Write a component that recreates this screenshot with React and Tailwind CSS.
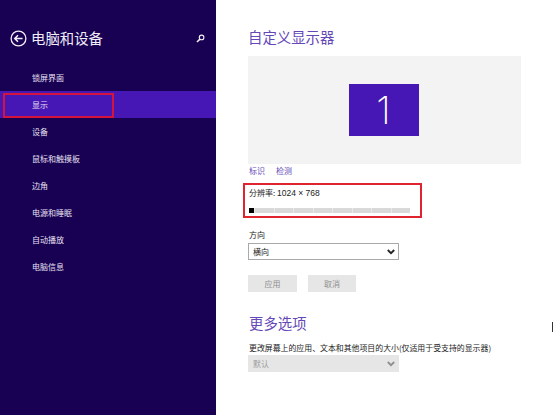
import React from 'react';

const FONT = "font-['Noto_Sans_CJK_SC','Liberation_Sans',sans-serif]";

const navItems = ['锁屏界面', '显示', '设备', '鼠标和触摸板', '边角', '电源和睡眠', '自动播放', '电脑信息'];
const sliderSegments = [1, 2, 3, 4, 5, 6, 7, 8];

const Chevron = ({ color }) => (
  <svg width="8" height="6" viewBox="0 0 8 6" fill="none" stroke={color} strokeWidth="1.8">
    <path d="M0.8 1 L4 4.2 L7.2 1" />
  </svg>
);

const Sidebar = () => (
  <aside className="relative w-[216px] shrink-0 bg-[#180052] text-[#e6e0f2]">
    <div className="flex items-start pl-[10px] pr-[11px] pt-[29px] h-[64px]">
      <svg width="17" height="17" viewBox="0 0 17 17" fill="none" stroke="#f2eff8" className="shrink-0 mt-px">
        <circle cx="8.5" cy="8.5" r="7.4" strokeWidth="1.3" />
        <path d="M12.6 8.5 H5 M8 5.3 L4.8 8.5 L8 11.7" strokeWidth="1.6" />
      </svg>
      <h1 className="ml-[4px] text-[14.4px] leading-[18px] text-[#f0edf7]">电脑和设备</h1>
      <svg width="9" height="9" viewBox="0 0 9 9" fill="none" stroke="#f2eff8" className="ml-auto mt-[5px]">
        <circle cx="5.6" cy="3.4" r="2.3" strokeWidth="1.1" />
        <path d="M3.9 5.1 L1 8" strokeWidth="1.5" />
      </svg>
    </div>
    <nav className="flex flex-col">
      {navItems.map((item) => (
        <div
          key={item}
          className={`h-[27px] flex items-center pl-[32px] text-[8px] ${item === '显示' ? 'bg-[#4617b4]' : ''}`}
        >
          {item}
        </div>
      ))}
    </nav>
    {/* rote Markierung */}
    <div className="absolute left-[3px] top-[93px] w-[111px] h-[25px] ring-2 ring-inset ring-[#d4143c]" />
  </aside>
);

const Main = () => (
  <main className="relative flex-1 pl-[248px] -ml-[216px] pt-[28px] text-[#222]">
    <h2 className="text-[14.4px] leading-[18px] text-[#6448b8]">自定义显示器</h2>
    <div className="mt-[10px] w-[273px] h-[108px] bg-[#f3f3f3] flex items-center justify-center pr-[2px]">
      <div className="w-[70px] h-[52px] bg-[#4617b4] flex items-center justify-center text-white text-[38px] font-extralight leading-none font-['Inter',sans-serif]">
        1
      </div>
    </div>
    <div className="ml-px mt-[2px] h-[10px] flex gap-[11px] text-[8px] leading-[10px] text-[#6448b8]">
      <span>标识</span>
      <span>检测</span>
    </div>

    <div className="ml-px mt-[12px] text-[8px] leading-[10px]">
      分辨率: <span className="font-['Liberation_Sans'] text-[8.5px]">1024 × 768</span>
    </div>
    <div className="ml-px mt-[10px] w-[161px] h-[5px] flex gap-px bg-[#e9e9e9]">
      <div className="w-[5px] h-full bg-black" />
      {sliderSegments.map((n) => (
        <div key={n} className="flex-1 h-full bg-[#d9d9d9]" />
      ))}
    </div>

    <div className="ml-px mt-[17px] text-[8px] leading-[10px]">方向</div>
    <div className="mt-[3px] w-[151px] h-[17px] ring-1 ring-inset ring-[#a9a9a9] bg-white flex items-center justify-between pl-[5px] pr-[4px] text-[8px]">
      <span>横向</span>
      <Chevron color="#222" />
    </div>

    <div className="mt-[15px] flex gap-[11px] text-[8px] text-[#8f8f8f]">
      <div className="w-[49px] h-[17px] bg-[#e6e6e6] flex items-center justify-center">应用</div>
      <div className="w-[48px] h-[17px] bg-[#e6e6e6] flex items-center justify-center">取消</div>
    </div>

    <h2 className="ml-px mt-[22px] text-[14.4px] leading-[18px] text-[#6448b8]">更多选项</h2>
    <div className="ml-px mt-[11px] text-[7.9px] leading-[10px] whitespace-nowrap">
      更改屏幕上的应用、文本和其他项目的大小(仅适用于受支持的显示器)
    </div>
    <div className="mt-[2px] w-[151px] h-[17px] bg-[#e6e6e6] flex items-center justify-between pl-[5px] pr-[4px] text-[8px] text-[#9a9a9a]">
      <span>默认</span>
      <Chevron color="#8f8f8f" />
    </div>

    {/* rote Markierung */}
    <div className="absolute left-[243px] top-[183px] w-[179px] h-[35px] ring-2 ring-inset ring-[#e0242f]" />
    {/* Mauszeiger */}
    <div className="absolute left-[552px] top-[322px] w-px h-[10px] bg-[#333]" />
  </main>
);

export default function App() {
  return (
    <div className={`relative flex w-[553px] h-[415px] overflow-hidden bg-white ${FONT}`}>
      <Sidebar />
      <Main />
    </div>
  );
}
